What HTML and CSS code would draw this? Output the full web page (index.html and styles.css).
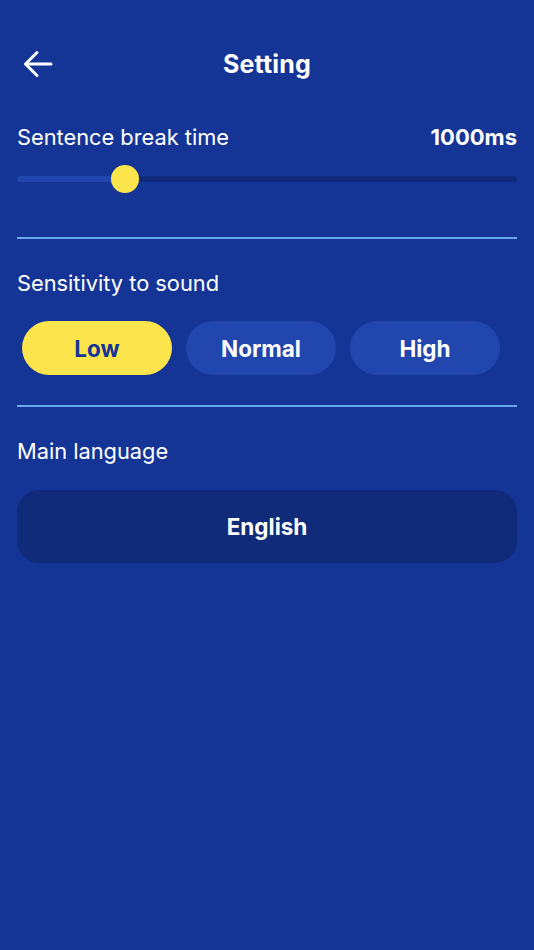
FILE: index.html
```html
<!DOCTYPE html>
<html>
<head>
<meta charset="utf-8">
<link rel="stylesheet" href="styles.css">
</head>
<body>
<div class="screen">
  <header class="topbar">
    <svg class="back" width="30" height="28" viewBox="0 0 30 28" fill="none" stroke="#fff" stroke-width="3" stroke-linecap="round" stroke-linejoin="round">
      <path d="M28 14H3"/>
      <path d="M14 2.5L2.5 14L14 25.5"/>
    </svg>
    <h1 class="title">Setting</h1>
  </header>

  <section class="section first">
    <div class="row">
      <span class="label">Sentence break time</span>
      <span class="value">1000ms</span>
    </div>
    <div class="slider">
      <div class="track"><div class="fill" style="width:108px"></div></div>
      <div class="thumb" style="left:94px"></div>
    </div>
  </section>

  <hr class="divider d1">

  <section class="section">
    <div class="label">Sensitivity to sound</div>
    <div class="pills">
      <div class="pill active">Low</div>
      <div class="pill">Normal</div>
      <div class="pill">High</div>
    </div>
  </section>

  <hr class="divider d2">

  <section class="section">
    <div class="label">Main language</div>
    <div class="lang">English</div>
  </section>
</div>
</body>
</html>
```

FILE: styles.css
```css
html, body {
  margin: 0;
  padding: 0;
  background: #143596;
}
body {
  font-family: Inter, "Open Sans", "Liberation Sans", sans-serif;
  color: #fff;
  width: 534px;
  height: 950px;
  overflow: hidden;
}
.screen {
  padding: 0 17px;
}
.topbar {
  position: relative;
  height: 60px;
  margin-top: 34px;
  display: flex;
  align-items: center;
  justify-content: center;
}
.back {
  position: absolute;
  left: 6px;
  top: 16px;
}
.title {
  margin: 0;
  font-size: 25px;
  font-weight: 700;
  letter-spacing: 0.2px;
}
.section.first {
  margin-top: 27px;
}
.row {
  display: flex;
  justify-content: space-between;
  align-items: center;
}
.label {
  font-size: 21.8px;
  font-weight: 400;
  line-height: 32px;
}
.value {
  font-size: 22px;
  font-weight: 700;
  line-height: 32px;
}
.slider {
  position: relative;
  height: 30px;
  margin-top: 11px;
}
.track {
  position: absolute;
  left: 0;
  right: 0;
  top: 12px;
  height: 6px;
  border-radius: 3px;
  background: #0f2b7a;
  overflow: hidden;
}
.fill {
  height: 100%;
  background: #2146ad;
}
.thumb {
  position: absolute;
  top: 1px;
  width: 28px;
  height: 28px;
  border-radius: 50%;
  background: #fce54c;
}
.divider {
  border: 0;
  height: 2px;
  background: #6aa8f0;
  margin: 0;
}
.divider.d1 {
  margin-top: 43px;
}
.divider.d2 {
  margin-top: 30px;
}
.divider + .section {
  margin-top: 28px;
}
.pills {
  display: flex;
  gap: 14px;
  margin: 22px 0 0 5px;
}
.pill {
  width: 150px;
  height: 54px;
  border-radius: 27px;
  background: #2146ad;
  display: flex;
  align-items: center;
  justify-content: center;
  font-size: 22.5px;
  font-weight: 700;
}
.pill.active {
  background: #fce54c;
  color: #143596;
}
.lang {
  margin-top: 23px;
  height: 73px;
  border-radius: 22px;
  background: #0f2b7a;
  display: flex;
  align-items: center;
  justify-content: center;
  font-size: 22.5px;
  font-weight: 700;
}
```
